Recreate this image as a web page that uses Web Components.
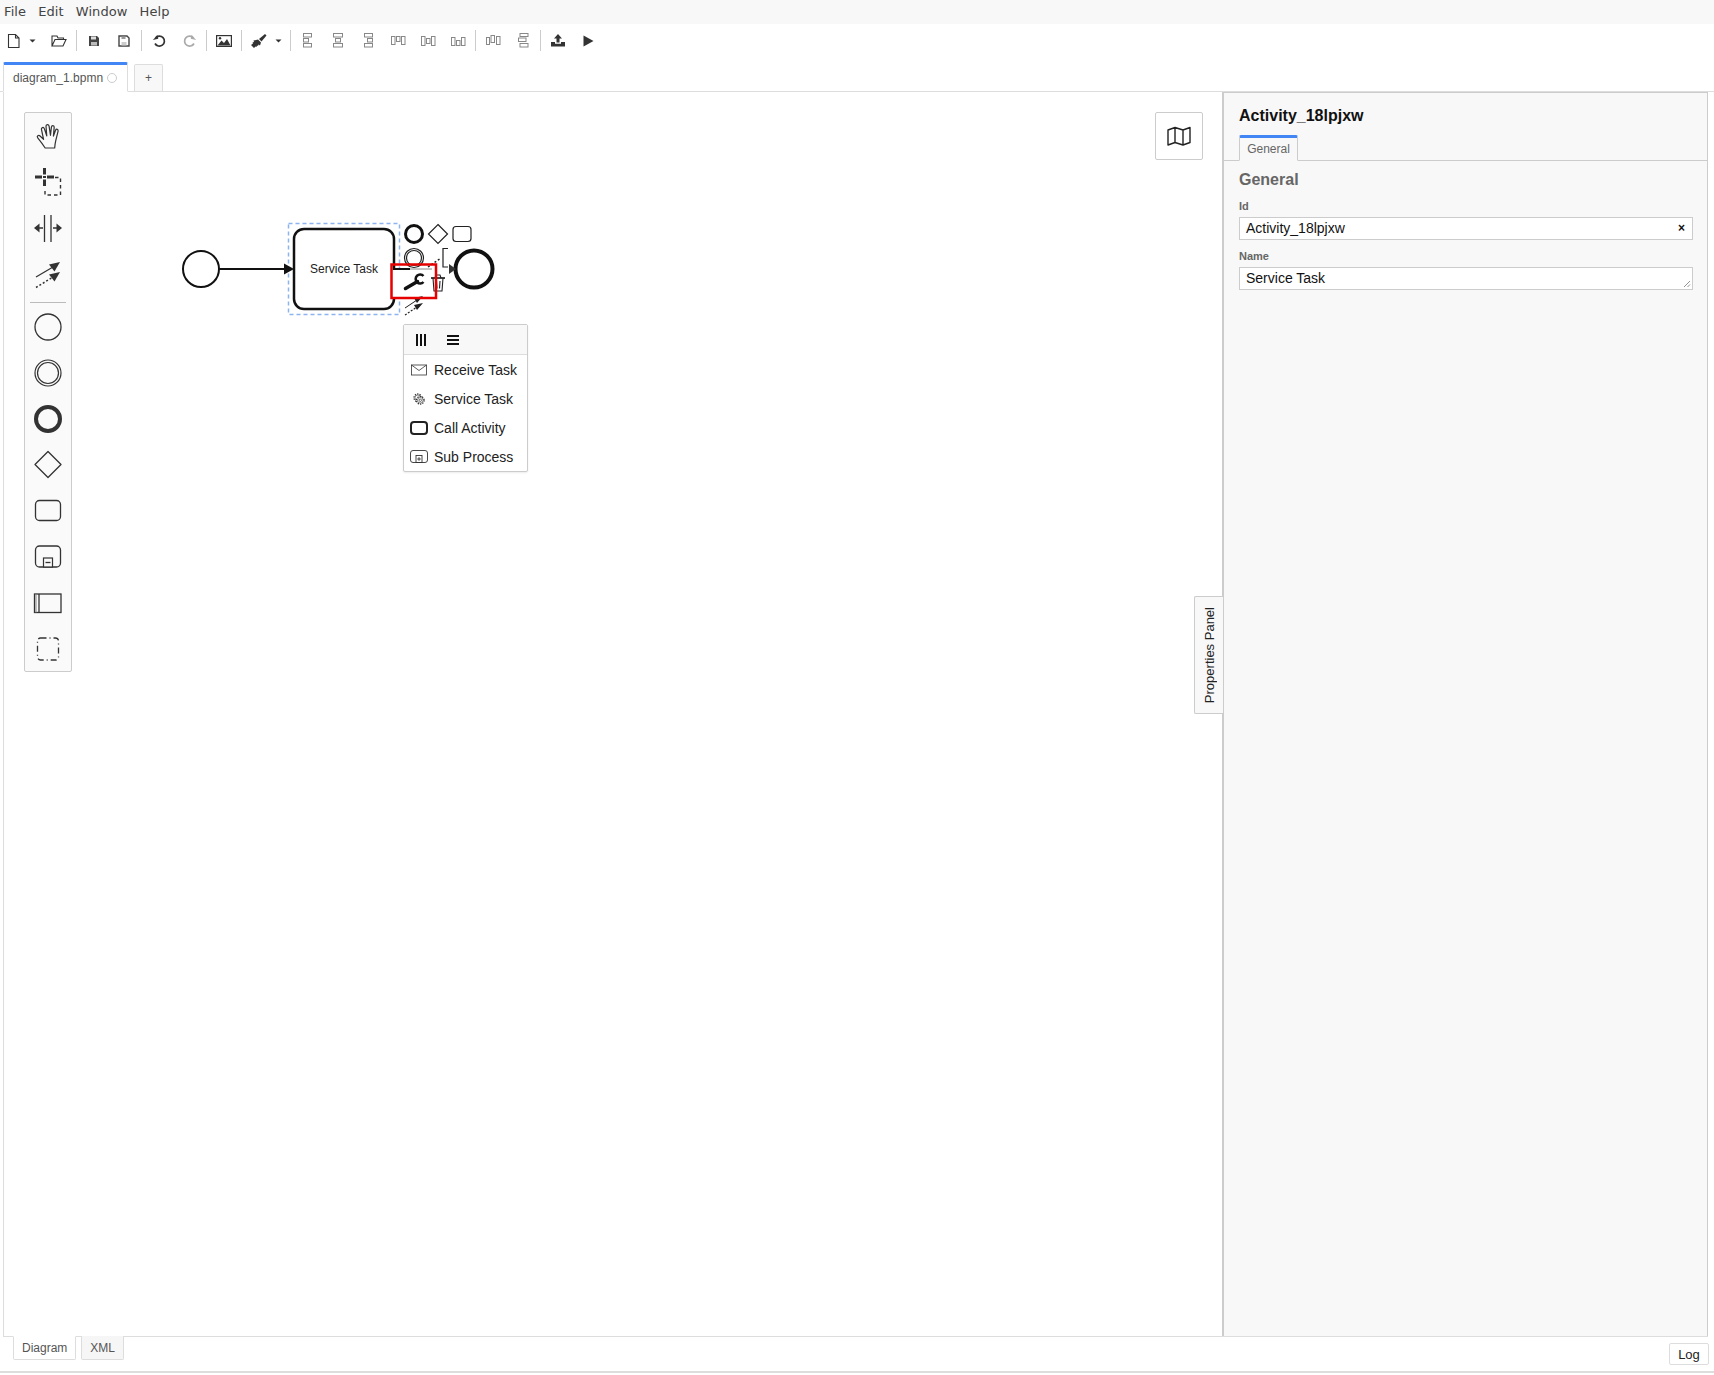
<!DOCTYPE html>
<html lang="en">
<head>
<meta charset="utf-8">
<title>BPMN Editor</title>
<style>
html,body{margin:0;padding:0;height:100%;background:#fff;overflow:hidden;font-family:"Liberation Sans",Arial,sans-serif;color:#333}
svg{display:block}
</style>
</head>
<body>
<app-shell>
  <menu-bar>
    <menu-item>File</menu-item><menu-item>Edit</menu-item><menu-item>Window</menu-item><menu-item>Help</menu-item>
  </menu-bar>
  <tool-bar>
    <tool-btn w="28"><svg width="16" height="16" viewBox="0 0 16 16" fill="none" stroke="#333" stroke-width="1.1"><path d="M2.5 1.5h7l3.5 3.5v9.5h-10.500zM9.500 1.500v3.500h3.500"/></svg></tool-btn>
    <tool-btn w="9"><svg width="7" height="4" viewBox="0 0 7 4"><path d="M.5 .5h6L3.500 3.500z" fill="#333"/></svg></tool-btn>
    <tool-btn w="30" style="margin-left:7px"><svg width="16" height="14" viewBox="0 0 16 14" fill="none" stroke="#333" stroke-width="1.100"><path d="M1 12V2h5l1 2h5.500v2M1 12l3-6.500h11l-3 6.500z"/></svg></tool-btn>
    <tool-sep></tool-sep>
    <tool-btn><svg width="12" height="12" viewBox="0 0 12 12"><path d="M1 1h8l2 2v8H1z" fill="#444"/><rect x="3" y="1.500" width="5" height="3" fill="#ddd"/><rect x="3" y="7" width="6" height="3.500" fill="#bbb"/></svg></tool-btn>
    <tool-btn><svg width="12" height="12" viewBox="0 0 12 12" fill="none" stroke="#444" stroke-width="1.400"><path d="M1 1h8l2 2v8H1z"/><rect x="3.500" y="7" width="5" height="3.500" fill="#ccc" stroke="none"/><rect x="3.500" y="1.500" width="4" height="2.500" fill="#999" stroke="none"/></svg></tool-btn>
    <tool-sep></tool-sep>
    <tool-btn><svg width="15" height="14" viewBox="0 0 15 14" fill="none"><path d="M3.500 4A5 5 0 1 1 3 9.500" stroke="#333" stroke-width="1.700"/><path d="M.5 5.500h5.500V1.500z" fill="#333" transform="rotate(-12 3 4)"/></svg></tool-btn>
    <tool-btn><svg width="15" height="14" viewBox="0 0 15 14" fill="none" style="transform:scaleX(-1)"><path d="M3.500 4A5 5 0 1 1 3 9.500" stroke="#aaa" stroke-width="1.700"/><path d="M.5 5.500h5.500V1.500z" fill="#aaa" transform="rotate(-12 3 4)"/></svg></tool-btn>
    <tool-sep></tool-sep>
    <tool-btn><svg width="16" height="12" viewBox="0 0 16 12"><rect x=".6" y=".6" width="14.800" height="10.800" fill="#fff" stroke="#333" stroke-width="1.200"/><path d="M1.500 10.500l4-5 2.500 2.500 3-4 3.500 6.500z" fill="#333"/><circle cx="4" cy="3.300" r="1.200" fill="#333"/></svg></tool-btn>
    <tool-sep></tool-sep>
    <tool-btn><svg width="16" height="14" viewBox="0 0 16 14"><path d="M14 0l1.500 1.500-5 6-2.500-2.500z" fill="#333"/><path d="M7 5.500l3 3-1 3-1.500-1-.5 1.500-1-.5-.5 1.500-1-.5-1.500 1.500-3-3 2-1.500-.5-1 1.500-.5-.5-1.500z" fill="#333"/></svg></tool-btn>
    <tool-btn w="9" style="margin-right:5px"><svg width="7" height="4" viewBox="0 0 7 4"><path d="M.5 .5h6L3.500 3.500z" fill="#333"/></svg></tool-btn>
    <tool-sep></tool-sep>
    <tool-btn><svg width="10" height="15" viewBox="0 0 10 15" fill="none" stroke="#888"><rect x=".5" y=".5" width="8" height="3.500"/><rect x=".5" y="5.500" width="5" height="3.500"/><rect x=".5" y="10.500" width="8" height="3.500"/></svg></tool-btn>
    <tool-btn><svg width="10" height="15" viewBox="0 0 10 15" fill="none" stroke="#888"><rect x=".5" y=".5" width="9" height="3.500"/><rect x="2.500" y="5.500" width="5" height="3.500"/><rect x=".5" y="10.500" width="9" height="3.500"/></svg></tool-btn>
    <tool-btn><svg width="10" height="15" viewBox="0 0 10 15" fill="none" stroke="#888"><rect x="1.500" y=".5" width="8" height="3.500"/><rect x="4.500" y="5.500" width="5" height="3.500"/><rect x="1.500" y="10.500" width="8" height="3.500"/></svg></tool-btn>
    <tool-btn><svg width="15" height="10" viewBox="0 0 15 10" fill="none" stroke="#888"><rect x=".5" y=".5" width="3.500" height="8"/><rect x="5.500" y=".5" width="3.500" height="5"/><rect x="10.500" y=".5" width="3.500" height="8"/></svg></tool-btn>
    <tool-btn><svg width="15" height="10" viewBox="0 0 15 10" fill="none" stroke="#888"><rect x=".5" y=".5" width="3.500" height="9"/><rect x="5.500" y="2.500" width="3.500" height="5"/><rect x="10.500" y=".5" width="3.500" height="9"/></svg></tool-btn>
    <tool-btn><svg width="15" height="10" viewBox="0 0 15 10" fill="none" stroke="#888"><rect x=".5" y="1.500" width="3.500" height="8"/><rect x="5.500" y="4.500" width="3.500" height="5"/><rect x="10.500" y="1.500" width="3.500" height="8"/></svg></tool-btn>
    <tool-sep></tool-sep>
    <tool-btn><svg width="15" height="11" viewBox="0 0 15 11" fill="none" stroke="#888"><rect x=".5" y="2.500" width="3" height="7"/><rect x="5" y=".5" width="3.500" height="7"/><rect x="10.500" y="1.500" width="3.500" height="8"/></svg></tool-btn>
    <tool-btn><svg width="11" height="15" viewBox="0 0 11 15" fill="none" stroke="#888"><rect x="2" y=".5" width="8" height="3"/><rect x=".5" y="5" width="7.500" height="3.500"/><rect x="2" y="10.500" width="8" height="3.500"/></svg></tool-btn>
    <tool-sep></tool-sep>
    <tool-btn><svg width="14" height="13" viewBox="0 0 14 13"><path d="M7 0l4 4.500H8.500v4h-3v-4H3z" fill="#333"/><path d="M0 8h4v1.800h6V8h4v4.500H0z" fill="#333"/></svg></tool-btn>
    <tool-btn><svg width="11" height="12" viewBox="0 0 11 12"><path d="M.5 .5v11l10-5.500z" fill="#333"/></svg></tool-btn>
  </tool-bar>
  <tab-strip>
    <file-tab active>diagram_1.bpmn</file-tab>
    <plus-tab>+</plus-tab>
  </tab-strip>
  <work-area>
    <diagram-canvas>
      <tool-palette></tool-palette>
      <map-toggle></map-toggle>
      <bpmn-diagram></bpmn-diagram>
      <replace-menu>
        <menu-entry label="Receive Task"><svg slot="icon" width="16" height="12" viewBox="0 0 16 12" fill="none" stroke="#333" stroke-width=".8"><rect x=".5" y="1" width="15" height="10"/><path d="M.5 1l7.500 5.500L15.500 1"/></svg></menu-entry>
        <menu-entry label="Service Task"><svg slot="icon" width="14" height="14" viewBox="0 0 14 14" fill="none" stroke="#333"><circle cx="5.800" cy="5.800" r="3.800" stroke-width="1.300" stroke-dasharray="1.300 1.100"/><circle cx="5.800" cy="5.800" r="2.800" stroke-width=".6"/><circle cx="8.300" cy="8.300" r="3.800" stroke-width="1.300" stroke-dasharray="1.300 1.100" fill="#fff"/><circle cx="8.300" cy="8.300" r="2.800" stroke-width=".6" fill="#fff"/><circle cx="8.300" cy="8.300" r="1.200" stroke-width=".7"/></svg></menu-entry>
        <menu-entry label="Call Activity"><svg slot="icon" width="18" height="14" viewBox="0 0 18 14" fill="none" stroke="#222" stroke-width="2"><rect x="1" y="1" width="16" height="12" rx="3"/></svg></menu-entry>
        <menu-entry label="Sub Process"><svg slot="icon" width="18" height="13" viewBox="0 0 18 13" fill="none" stroke="#333" stroke-width=".9"><rect x=".5" y=".5" width="17" height="12" rx="2.500"/><rect x="6" y="5.500" width="6" height="7"/><path d="M9 7.200v3.600M7.200 9h3.600"/></svg></menu-entry>
      </replace-menu>
    </diagram-canvas>
    <panel-toggle>Properties Panel</panel-toggle>
    <props-panel>
      <span slot="title">Activity_18lpjxw</span>
      <prop-field label="Id" value="Activity_18lpjxw" clear></prop-field>
      <prop-field label="Name" value="Service Task" multi></prop-field>
    </props-panel>
  </work-area>
  <foot-bar>
    <view-tab active>Diagram</view-tab>
    <view-tab>XML</view-tab>
    <log-btn>Log</log-btn>
  </foot-bar>
</app-shell>
<script>
function def(name, css, html, extra){
  customElements.define(name, class extends HTMLElement{
    constructor(){super();const r=this.attachShadow({mode:'open'});
      r.innerHTML='<style>'+css+'</style>'+(typeof html==='function'?html(this):html);}
    connectedCallback(){
      if(extra) extra(this);
      if(typeof html==='function') this.shadowRoot.innerHTML='<style>'+css+'</style>'+html(this);
    }
  });
}
const FONT='"Liberation Sans",Arial,sans-serif';
def('app-shell',':host{display:flex;flex-direction:column;width:1714px;height:1375px}','<slot></slot>');
def('menu-bar',':host{display:flex;height:24px;background:#f8f8f8;padding-left:4px;gap:12px;align-items:center;font:13px "DejaVu Sans",sans-serif;color:#444}','<slot></slot>');
def('menu-item',':host{display:block;line-height:22px;height:22px;letter-spacing:.1px}','<slot></slot>');
def('tool-bar',':host{display:flex;height:36px;box-sizing:border-box;padding-bottom:3px;align-items:center;background:#fff}','<slot></slot>');
def('tool-btn',':host{display:flex;align-items:center;justify-content:center;width:30px;height:28px;flex:none}','<slot></slot>',el=>{const w=el.getAttribute('w');if(w)el.style.width=w+'px'});
def('tool-sep',':host{display:block;width:1px;height:21px;background:#ccc;margin:0 2px;flex:none}','');
def('tab-strip',':host{display:flex;height:32px;align-items:flex-end;padding-left:3px;border-bottom:1px solid #ddd;box-sizing:border-box;gap:6px}','<slot></slot>');
def('file-tab',':host{display:flex;align-items:center;box-sizing:border-box;width:125px;height:30px;margin-bottom:-1px;border:1px solid #ddd;border-top:3px solid #4285f4;border-bottom:1px solid #fff;background:#fff;padding-left:9px;font:12px '+FONT+';color:#555;border-radius:2px 2px 0 0}.d{width:8px;height:8px;border:1px solid #ccc;border-radius:50%;margin-left:4px;flex:none}','<slot></slot><i class="d"></i>');
def('plus-tab',':host{display:flex;align-items:center;justify-content:center;box-sizing:border-box;width:29px;height:27px;border:1px solid #ddd;border-bottom:none;background:#f8f8f8;font:12px '+FONT+';color:#555;border-radius:2px 2px 0 0}','<slot></slot>');
def('work-area',':host{display:flex;height:1245px;position:relative;margin-left:3px;margin-right:6px;border-left:1px solid #ddd;border-bottom:1px solid #ddd;box-sizing:border-box}','<slot></slot>');
def('diagram-canvas',':host{display:block;position:relative;flex:1;min-width:0;background:#fff}','<slot></slot>');

const pi=(inner)=>`<div class="i"><svg width="32" height="32" viewBox="0 0 32 32" fill="none" stroke="#333">${inner}</svg></div>`;
def('tool-palette',
 ':host{position:absolute;left:20px;top:20px;width:48px;height:560px;box-sizing:border-box;border:1px solid #ccc;border-radius:2px;background:#fafafa;display:flex;flex-direction:column;align-items:center}.i{width:46px;height:46px;display:flex;align-items:center;justify-content:center;flex:none}.s{width:36px;height:1px;background:#bbb;margin:5px 0 0;flex:none}svg{display:block;overflow:visible}',
 pi('<g transform="translate(1.500 1.500) scale(1.060)"><path stroke-width="1.150" stroke-linejoin="round" stroke-linecap="round" d="M11 25c-2-3-5-7-7-9.500-1.300-1.700.8-3.200 2.200-1.800l3.300 3.200L7.500 7.500c-.4-1.900 2-2.600 2.700-.8l2.300 6.800-.7-9c-.1-2 2.500-2.200 2.900-.2l1.300 8.700.9-7.700c.3-1.900 2.700-1.700 2.600.2l-.7 8.300 2-5.500c.7-1.700 2.800-1 2.400.8l-2.200 9c-.5 2-.8 3.800-1 6.900z"/></g>')
 +pi('<path d="M3 11h7M15 11h7M12.500 2v6.500M12.500 13.500V20" stroke-width="3"/><path d="M11 10h3v2h-3z" fill="#333" stroke="none"/><path d="M23 11.500h5.500V29H13v-6" stroke-width="1.400" stroke-dasharray="3.500 3"/>')
 +pi('<path d="M12.500 3v27M19 3v27" stroke-width="1.300"/><path d="M7 16h4M21 16h4" stroke-width="1.600"/><path d="M2 16l5.500-4.500v9z" fill="#333" stroke="none"/><path d="M30 16l-5.500-4.500v9z" fill="#333" stroke="none"/>')
 +pi('<path d="M4 19L21 9" stroke-width="1.300"/><path d="M28 4l-11 2.500 5.500 7z" fill="#333" stroke="none"/><path d="M4 29.500L21 19" stroke-width="1.500" stroke-dasharray="2 2"/><path d="M28 14l-11 2.500 5.500 7z" fill="#333" stroke="none"/>')
 +'<div class="s"></div>'
 +'<div style="height:1px;flex:none"></div>'
 +pi('<circle cx="16" cy="16" r="13" stroke-width="1.300"/>')
 +pi('<circle cx="16" cy="16" r="13" stroke-width="1.200"/><circle cx="16" cy="16" r="10.500" stroke-width="1.200"/>')
 +pi('<circle cx="16" cy="16" r="12" stroke-width="4"/>')
 +pi('<path d="M16 2.500l13 13-13 13-13-13z" stroke-width="1.300" stroke-linejoin="round"/>')
 +pi('<rect x="3.500" y="5.500" width="25" height="20" rx="4" stroke-width="1.300"/>')
 +pi('<rect x="3.500" y="5" width="25" height="21" rx="4" stroke-width="1.300"/><rect x="11.500" y="17" width="9" height="9" fill="#fafafa" stroke-width="1.200"/><path d="M13.500 21.500h5" stroke-width="1.300"/>')
 +pi('<rect x="2.500" y="7" width="26.500" height="18.500" stroke-width="1.300"/><path d="M7 7v18.500" stroke-width="1.300"/><path d="M4 7v18.500" stroke="#888" stroke-width="1"/>')
 +pi('<rect x="5.500" y="5" width="21" height="22" rx="3" stroke-width="1.300" stroke-dasharray="6 3 1 3"/>')
);
def('map-toggle',':host{position:absolute;left:1151px;top:20px;width:48px;height:48px;box-sizing:border-box;background:#fff;border:1px solid #ccc;border-radius:2px;display:flex;align-items:center;justify-content:center}',
 '<svg width="24" height="20" viewBox="0 0 24 20" fill="none" stroke="#222" stroke-width="1.400" stroke-linejoin="round"><path d="M1 4l7-2.500 8 2.500 7-2.500v15l-7 2.500-8-2.500-7 2.500zM8 1.500v15M16 4v15"/></svg>');
def('bpmn-diagram',':host{position:absolute;left:0;top:0;width:1200px;height:400px}svg{display:block;position:absolute;left:-4px;top:-92px}text{font:12px '+FONT+';fill:#222}',
 `<svg width="1200" height="500" viewBox="0 0 1200 500" fill="none">
   <rect x="288.500" y="223.500" width="111" height="91" stroke="#8cb4f0" stroke-width="1.500" stroke-dasharray="4 3"/>
   <circle cx="201" cy="269" r="18" stroke="#111" stroke-width="2"/>
   <path d="M219 269H288" stroke="#111" stroke-width="2"/>
   <path d="M284 263.500l10 5.500-10 5.500z" fill="#111"/>
   <rect x="294" y="229" width="100" height="80" rx="10" stroke="#111" stroke-width="2.500" fill="#fff"/>
   <text x="344" y="273" text-anchor="middle">Service Task</text>
   <circle cx="474" cy="269" r="18.500" stroke="#111" stroke-width="4"/>
   <circle cx="414" cy="258" r="9.500" stroke="#222" stroke-width="1.200"/><circle cx="414" cy="258" r="7.500" stroke="#222" stroke-width="1.200"/>
   <rect x="392" y="270" width="44" height="27" fill="#fff"/>
   <path d="M394 269H410" stroke="#111" stroke-width="2"/><path d="M410 269H432" stroke="#888" stroke-width="1"/>
   <path d="M449 264l7 5-7 5z" fill="#333"/>
   <circle cx="414" cy="234" r="8.500" stroke="#111" stroke-width="3"/>
   <path d="M438 224.500l9.500 9.500-9.500 9.500-9.500-9.500z" stroke="#222" stroke-width="1.200"/>
   <rect x="453" y="226.500" width="18" height="15" rx="3" stroke="#222" stroke-width="1.200"/>
   <path d="M448 248.500h-5v18.500h5" stroke="#222" stroke-width="1.200"/>
   <path d="M428 267l13-9" stroke="#222" stroke-width="1.500" stroke-dasharray="2 2"/>
   <path d="M405.500 288.500l12-7" stroke="#111" stroke-width="3.500" stroke-linecap="round"/>
   <path d="M423.500 276A4.500 4.500 0 1 0 423.500 282" stroke="#111" stroke-width="2.500"/>
   <path d="M431 278h14" stroke="#222" stroke-width="1.700"/><path d="M433 278l1 13h8l1-13M435 278l1-3h4l1 3M436.500 281l.5 7.500M440 281l-.5 7.500" stroke="#222" stroke-width="1.100"/>
   <path d="M405 308l12-8" stroke="#222" stroke-width="1"/><path d="M405 315l12-8" stroke="#222" stroke-width="1.200" stroke-dasharray="2 1.500"/>
   <path d="M423 296l-9 2 3 5zM423 303l-9 2 3 5z" fill="#222"/>
   <rect x="391.500" y="264.500" width="44.500" height="33.500" stroke="#e60000" stroke-width="2.500"/>
 </svg>`);
def('replace-menu',':host{position:absolute;left:399px;top:232px;width:125px;box-sizing:border-box;background:#fff;border:1px solid #ccc;border-radius:2px;box-shadow:0 1px 2px rgba(0,0,0,.08);display:flex;flex-direction:column;font:14px '+FONT+';color:#222}.h{height:29px;background:#f8f8f8;border-bottom:1px solid #ddd;display:flex;align-items:center;padding-left:12px;gap:19px}',
 `<div class="h"><svg width="10" height="12" viewBox="0 0 10 12"><path d="M1 0v12M5 0v12M9 0v12" stroke="#111" stroke-width="2"/></svg><svg width="12" height="10" viewBox="0 0 12 10" style="margin-left:2px"><path d="M0 1h12M0 5h12M0 9h12" stroke="#111" stroke-width="1.800"/></svg></div><div class="b"><slot></slot></div>`);
def('menu-entry',':host{display:flex;align-items:center;height:29px;padding-left:6px}.ic{width:18px;height:14px;display:flex;align-items:center;justify-content:center;margin-right:6px}',
 el=>`<span class="ic"><slot name="icon"></slot></span><span>${el.getAttribute('label')||''}</span>`);
def('panel-toggle',':host{position:absolute;left:1190px;top:504px;width:29px;height:118px;box-sizing:border-box;background:#f8f8f8;border:1px solid #ccc;border-right:none;border-radius:2px 0 0 2px;display:flex;align-items:center;justify-content:center;padding-left:1px;font:13px '+FONT+';color:#222;z-index:2}span{display:block;writing-mode:vertical-rl;transform:rotate(180deg);white-space:nowrap}','<span><slot></slot></span>');
def('props-panel',':host{display:block;width:486px;flex:none;box-sizing:border-box;background:#f8f8f8;border-left:2px solid #ccc;border-top:1px solid #ccc;border-right:1px solid #ccc;font-family:'+FONT+'}.t{font:bold 16px '+FONT+';color:#111;padding:14px 0 0 15px;height:25px}.tabs{height:29px;border-bottom:1px solid #ccc;box-sizing:border-box;padding:3px 0 0 15px;display:flex}.tab{box-sizing:border-box;width:59px;height:26px;border:1px solid #ccc;border-top:3px solid #4285f4;border-bottom:1px solid #f8f8f8;display:flex;align-items:center;justify-content:center;font:12px '+FONT+';color:#666;border-radius:2px 2px 0 0}.g{font:bold 16px '+FONT+';color:#666;padding:10px 0 0 15px;height:19px}.f{padding:0 14px 0 15px}',
 '<div class="t"><slot name="title"></slot></div><div class="tabs"><div class="tab">General</div></div><div class="g">General</div><div class="f"><slot></slot></div>');
def('prop-field',':host{display:block;margin-top:9px}label{display:block;font:bold 11px '+FONT+';color:#666;height:14px;line-height:14px;margin-bottom:4px}.b{position:relative;box-sizing:border-box;height:23px;background:#fff;border:1px solid #ccc;font:14px '+FONT+';color:#111;line-height:21px;padding-left:6px}.x{position:absolute;right:7px;top:0;font:bold 12px '+FONT+';line-height:20px;color:#111}.r{position:absolute;right:1px;bottom:1px}',
 el=>`<label>${el.getAttribute('label')}</label><div class="b">${el.getAttribute('value')}${el.hasAttribute('clear')?'<span class="x">×</span>':''}${el.hasAttribute('multi')?'<svg class="r" width="8" height="8" viewBox="0 0 8 8"><path d="M1 7l6-6M4.500 7l2.500-2.500" stroke="#777" stroke-width=".8"/></svg>':''}</div>`);
def('foot-bar',':host{display:flex;height:36px;box-sizing:border-box;border-bottom:2px solid #ddd;padding-left:13px;gap:5px;position:relative;align-items:flex-start;width:100%}','<slot></slot>');
def('view-tab',':host{display:flex;align-items:center;justify-content:center;box-sizing:border-box;height:24px;margin-top:-1px;border:1px solid #ddd;border-top:none;padding:0 8px;font:12px '+FONT+';color:#555;background:#f6f6f6;border-radius:0 0 2px 2px}:host([active]){background:#fff;border-top:1px solid #fff}','<slot></slot>');
def('log-btn',':host{position:absolute;right:5px;top:6px;width:40px;height:22px;box-sizing:border-box;border:1px solid #ddd;border-radius:2px;background:#fff;display:flex;align-items:center;justify-content:center;font:13px '+FONT+';color:#222}','<slot></slot>');
</script>
</body>
</html>
